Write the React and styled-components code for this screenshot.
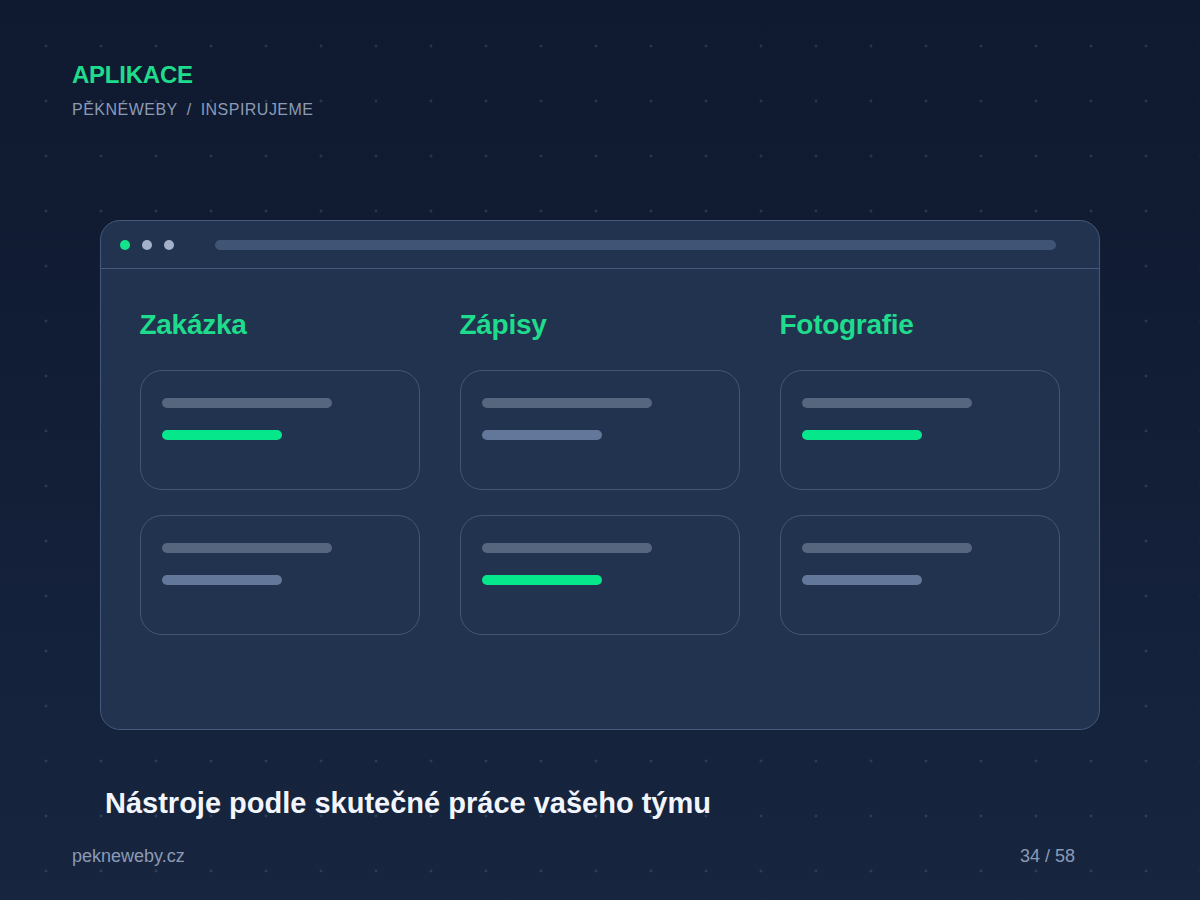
import React from "react";
import styled, { createGlobalStyle } from "styled-components";

const GlobalStyle = createGlobalStyle`
  html, body {
    margin: 0;
    padding: 0;
    background: #0f192f;
  }
  * {
    box-sizing: border-box;
  }
`;

const columns = [
  {
    title: "Zakázka",
    cards: [{ accent: "green" }, { accent: "grey" }],
  },
  {
    title: "Zápisy",
    cards: [{ accent: "grey" }, { accent: "green" }],
  },
  {
    title: "Fotografie",
    cards: [{ accent: "green" }, { accent: "grey" }],
  },
];

function App() {
  return (
    <>
      <GlobalStyle />
      <Page>
        <Header>
          <Title>APLIKACE</Title>
          <Crumbs>
            PĚKNÉWEBY<Slash>/</Slash>INSPIRUJEME
          </Crumbs>
        </Header>

        <Window>
          <WindowBar>
            <Dot $color="#14e38b" />
            <Dot $color="#a4b1cb" />
            <Dot $color="#a4b1cb" />
            <UrlBar />
          </WindowBar>
          <Board>
            {columns.map((col) => (
              <Column key={col.title}>
                <ColumnTitle>{col.title}</ColumnTitle>
                <CardList>
                  {col.cards.map((card, i) => (
                    <Card key={i}>
                      <Line $width={170} />
                      <Line $width={120} $accent={card.accent} />
                    </Card>
                  ))}
                </CardList>
              </Column>
            ))}
          </Board>
        </Window>

        <Caption>Nástroje podle skutečné práce vašeho týmu</Caption>

        <Footer>
          <span>pekneweby.cz</span>
          <span>34 / 58</span>
        </Footer>
      </Page>
    </>
  );
}

export default App;

const Page = styled.div`
  width: 1200px;
  height: 900px;
  overflow: hidden;
  padding: 60px 72px 0;
  display: flex;
  flex-direction: column;
  font-family: "Liberation Sans", Arial, sans-serif;
  background-color: #0f192f;
  background-image: radial-gradient(
      circle,
      rgba(150, 172, 210, 0.28) 0.9px,
      transparent 1.4px
    ),
    linear-gradient(180deg, #0f192f 0%, #121e36 45%, #17253f 100%);
  background-size: 55px 55px, 100% 100%;
  background-position: 18.5px 18.5px, 0 0;
`;

const Header = styled.div`
  display: flex;
  flex-direction: column;
`;

const Title = styled.div`
  font-size: 24px;
  line-height: 30px;
  font-weight: 700;
  letter-spacing: -0.01em;
  color: #1fdc8c;
`;

const Crumbs = styled.div`
  margin-top: 10px;
  font-size: 16px;
  line-height: 20px;
  letter-spacing: 0.03em;
  color: #8b9bb6;
`;

const Slash = styled.span`
  margin: 0 9px;
`;

const Window = styled.div`
  margin: 100px 28px 0;
  height: 510px;
  border: 1.5px solid #43587a;
  border-radius: 20px;
  background: #22334f;
  display: flex;
  flex-direction: column;
`;

const WindowBar = styled.div`
  height: 48px;
  flex-shrink: 0;
  display: flex;
  align-items: center;
  gap: 12px;
  padding: 0 43px 0 18.5px;
  border-bottom: 1.5px solid #43587a;
`;

const Dot = styled.span`
  width: 10px;
  height: 10px;
  border-radius: 50%;
  background: ${(p) => p.$color};
`;

const UrlBar = styled.span`
  flex: 1;
  height: 10px;
  margin-left: 29px;
  border-radius: 5px;
  background: #405475;
`;

const Board = styled.div`
  display: grid;
  grid-template-columns: repeat(3, 280px);
  gap: 40px;
  padding: 39px 38.5px 0;
`;

const Column = styled.div`
  display: flex;
  flex-direction: column;
`;

const ColumnTitle = styled.h3`
  margin: 0;
  font-size: 28px;
  line-height: 33.6px;
  font-weight: 700;
  letter-spacing: -0.01em;
  color: #1fdc8c;
`;

const CardList = styled.div`
  margin-top: 28.5px;
  display: flex;
  flex-direction: column;
  gap: 25px;
`;

const Card = styled.div`
  height: 120px;
  border: 1.5px solid #415677;
  border-radius: 22px;
  padding: 26.5px 21px 0;
  display: flex;
  flex-direction: column;
  gap: 22px;
`;

const Line = styled.span`
  display: block;
  width: ${(p) => p.$width}px;
  height: 10px;
  border-radius: 5px;
  background: ${(p) =>
    p.$accent === "green"
      ? "#06e68a"
      : p.$accent === "grey"
      ? "#63779a"
      : "#56667f"};
`;

const Caption = styled.h2`
  margin: 55px 0 0 33px;
  font-size: 29px;
  line-height: 36px;
  font-weight: 700;
  color: #f2f6fc;
`;

const Footer = styled.div`
  margin-top: 24px;
  padding-right: 53px;
  display: flex;
  justify-content: space-between;
  font-size: 18px;
  line-height: 22px;
  color: #8b9bb6;
`;
